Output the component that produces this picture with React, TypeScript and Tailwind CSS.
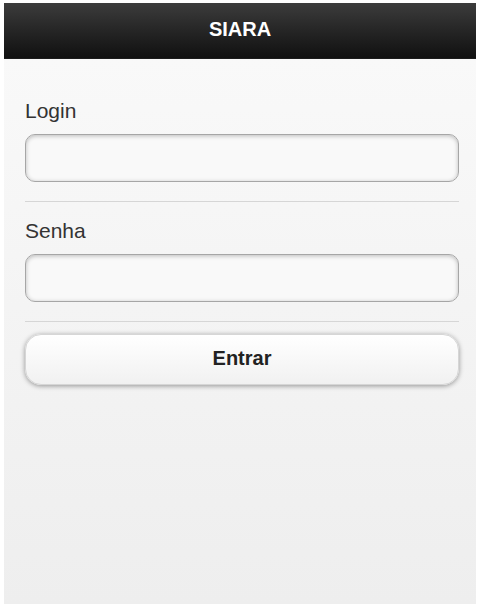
import React from 'react';

export default function App() {
  return (
    <div className="w-[479px] h-[608px] bg-white pt-[3px] pl-[4px] pr-[3px] pb-[4px] font-['Liberation_Sans',Arial,sans-serif]">
      <div className="h-full flex flex-col">
        {/* Header */}
        <header className="h-[56px] shrink-0 flex items-center justify-center pb-[4px] bg-gradient-to-b from-[#3c3c3c] to-[#111111] border-b border-[#1c1c1c]">
          <h1 className="text-[20px] font-bold text-white leading-none">SIARA</h1>
        </header>

        {/* Content */}
        <main className="flex-1 bg-gradient-to-b from-[#f9f9f9] to-[#eeeeee] pt-[42px] pl-[21px] pr-[17px]">
          <label className="block text-[21px] leading-[20px] text-[#333333] mb-[13px]">Login</label>
          <input
            type="text"
            className="block w-full h-[48px] rounded-[10px] border border-[#a6a6a6] bg-[#f9f9f9] shadow-[inset_0_1px_4px_rgba(0,0,0,0.25)] outline-none px-3 text-[18px]"
          />
          <div className="h-px bg-[#d6d6d6] mt-[19px] mb-[19px]" />

          <label className="block text-[21px] leading-[20px] text-[#333333] mb-[13px]">Senha</label>
          <input
            type="password"
            className="block w-full h-[48px] rounded-[10px] border border-[#a6a6a6] bg-[#f9f9f9] shadow-[inset_0_1px_4px_rgba(0,0,0,0.25)] outline-none px-3 text-[18px]"
          />
          <div className="h-px bg-[#d6d6d6] mt-[19px] mb-[12px]" />

          <button className="w-full h-[51px] pb-[3px] rounded-[16px] border border-[#d6d6d6] bg-gradient-to-b from-[#ffffff] to-[#f1f1f1] shadow-[0_1px_5px_rgba(0,0,0,0.4)] text-[20px] font-bold text-[#222222]">
            Entrar
          </button>
        </main>
      </div>
    </div>
  );
}
